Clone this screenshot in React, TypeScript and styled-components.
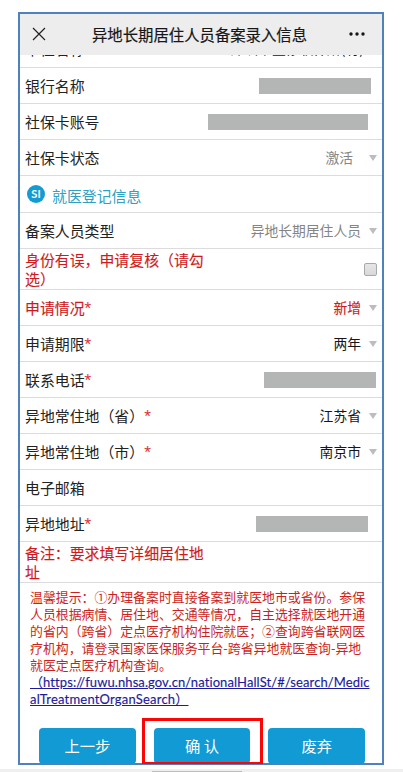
import React from "react";
import styled, { createGlobalStyle } from "styled-components";

const GlobalStyle = createGlobalStyle`
  * { box-sizing: border-box; }
  html, body { margin: 0; background: #fff; overflow: hidden; }
  body { font-family: "Noto Sans CJK SC", sans-serif; text-spacing-trim: space-all; }
  button { font-family: inherit; }
`;

const Page = styled.div`
  display: flex;
  flex-direction: column;
  width: 403px;
  height: 772px;
  padding-top: 12px;
  background: #fff;
  overflow: hidden;
`;

const Phone = styled.main`
  display: flex;
  flex-direction: column;
  width: 366px;
  height: 753px;
  margin-left: 18px;
  flex: none;
  border: 2px solid #4f81bd;
  background: #fff;
`;

const Header = styled.header`
  display: grid;
  grid-template-columns: 36px 1fr 48px;
  align-items: center;
  height: 41px;
  flex: none;
  padding: 0 0 2px;
  background: #ededed;
  svg { display: block; }
`;

const CloseButton = styled.button`
  padding: 0 0 0 12px;
  border: 0;
  background: none;
`;

const MoreButton = styled.button`
  padding: 0 0 0 14px;
  border: 0;
  background: none;
`;

const Title = styled.h1`
  margin: 0;
  padding-left: 36px;
  font-size: 15.36px;
  line-height: 20px;
  font-weight: 400;
  -webkit-text-stroke: 0.2px #171717;
  color: #171717;
  white-space: nowrap;
`;

const Row = styled.div<{ $h?: number }>`
  display: flex;
  align-items: center;
  justify-content: space-between;
  height: ${(p) => p.$h ?? 36}px;
  flex: none;
  padding: 0 5px;
  border-bottom: 1px solid #dcdcde;
`;

const ClippedRow = styled(Row)`
  align-items: flex-end;
  overflow: hidden;
  padding-bottom: 9px;
  padding-right: 18px;
`;

const Label = styled.label<{ $red?: boolean }>`
  width: 182px;
  font-size: 14.9px;
  line-height: 19.5px;
  color: ${(p) => (p.$red ? "#cf1a1c" : "#222")};
  -webkit-text-stroke: ${(p) => (p.$red ? "0.15px #cf1a1c" : "0")};
`;

const Star = styled.span`
  color: #e0383c;
  font-family: Roboto, sans-serif;
  font-size: 15.5px;
  line-height: 1;
  vertical-align: 1px;
  -webkit-text-stroke: 0;
`;

const Value = styled.div<{ $tone?: string }>`
  display: flex;
  align-items: center;
  gap: 8px;
  padding-bottom: 2px;
  font-size: 13.8px;
  line-height: 20px;
  white-space: nowrap;
  color: ${(p) => p.$tone ?? "#161616"};
  -webkit-text-stroke: ${(p) => (p.$tone === "#cf1a1c" ? "0.15px #cf1a1c" : "0")};
`;

const ClippedValue = styled(Value)`
  padding-bottom: 0;
`;

const Spaced = styled.span`
  margin-right: 8px;
`;

const Arrow = styled.span`
  border: 4px solid transparent;
  border-top: 6px solid #bdbdbd;
  border-bottom: 0;
  margin-top: 3px;
`;

const Mask = styled.div<{ $w: number; $right: number }>`
  width: ${(p) => p.$w}px;
  height: 16px;
  margin-right: ${(p) => p.$right}px;
  background: #b4b6b5;
`;

const Section = styled.h2`
  display: flex;
  align-items: center;
  gap: 7px;
  height: 37px;
  flex: none;
  margin: 0;
  padding: 0 7px;
  border-bottom: 1px solid #dcdcde;
  font-size: 14.9px;
  line-height: 20px;
  font-weight: 400;
  color: #2f9fc4;
`;

const SectionName = styled.span`
  padding-top: 3px;
`;

const Badge = styled.span`
  display: flex;
  align-items: center;
  justify-content: center;
  width: 18px;
  height: 18px;
  border-radius: 50%;
  background: #149bd3;
  color: #fff;
  font: 700 11px/18px Lato, sans-serif;
`;

const Checkbox = styled.span`
  width: 13px;
  height: 13px;
  border: 1px solid #a9a9a9;
  border-radius: 2px;
  background: linear-gradient(#e6e6e6, #d8d8d8);
`;

const Tip = styled.div`
  flex: none;
  height: 135px;
  padding: 5px 0 0 10px;
  font-size: 12.9px;
  line-height: 17px;
  color: #cc1f22;
  white-space: nowrap;
`;

const TipLine = styled.div`
  height: 17px;
`;

const TipLink = styled.a<{ $spacing: number }>`
  font-family: Lato, "Noto Sans CJK SC", sans-serif;
  font-size: 13px;
  letter-spacing: ${(p) => p.$spacing}px;
  color: #1d1b9c;
  -webkit-text-stroke: 0.15px #1d1b9c;
  text-decoration: underline;
`;

const Actions = styled.div`
  display: flex;
  gap: 18px;
  padding: 10px 17px 0 19px;
  flex: 1;
`;

const ActionButton = styled.button<{ $marked?: boolean }>`
  position: relative;
  flex: 1;
  height: 36px;
  padding: 0 0 2px;
  border: 0;
  border-radius: 4px;
  background: #119ad4;
  color: #fff;
  font-size: 15.3px;
  line-height: 34px;
  ${(p) =>
    p.$marked &&
    `&::after {
      content: "";
      position: absolute;
      left: -12px;
      right: -13px;
      top: -10px;
      bottom: 0;
      border: 3px solid #fc0505;
      border-bottom-width: 2px;
    }`}
`;

const ScrollTrack = styled.div`
  height: 3px;
  margin-top: 4px;
  padding: 2px 0 0 152px;
  background: #efefef;
`;

const ScrollThumb = styled.div`
  width: 90px;
  height: 1px;
  background: #bcbcbc;
`;

type Field = {
  label: string;
  h?: number;
  red?: boolean;
  required?: boolean;
  value?: string;
  tone?: string;
  spaced?: boolean;
  mask?: [number, number];
  check?: boolean;
};

const cardFields: Field[] = [
  { label: "银行名称", mask: [112, 6] },
  { label: "社保卡账号", mask: [160, 9] },
  { label: "社保卡状态", value: "激活", tone: "#858585", spaced: true },
];

const visitFields: Field[] = [
  { label: "备案人员类型", value: "异地长期居住人员", tone: "#858585" },
  { label: "身份有误，申请复核（请勾选）", red: true, h: 41, check: true },
  { label: "申请情况", red: true, required: true, value: "新增", tone: "#cf1a1c" },
  { label: "申请期限", required: true, value: "两年" },
  { label: "联系电话", required: true, mask: [112, 1] },
  { label: "异地常住地（省）", required: true, value: "江苏省" },
  { label: "异地常住地（市）", required: true, value: "南京市" },
  { label: "电子邮箱" },
  { label: "异地地址", required: true, mask: [112, 9] },
  { label: "备注：要求填写详细居住地址", red: true, h: 41 },
];

const tipLines = [
  "温馨提示：①办理备案时直接备案到就医地市或省份。参保",
  "人员根据病情、居住地、交通等情况，自主选择就医地开通",
  "的省内（跨省）定点医疗机构住院就医；②查询跨省联网医",
  "疗机构，请登录国家医保服务平台-跨省异地就医查询-异地",
  "就医定点医疗机构查询。",
];

const FieldRow = ({ f }: { f: Field }) => (
  <Row $h={f.h}>
    <Label $red={f.red}>
      {f.label}
      {f.required && <Star>*</Star>}
    </Label>
    {f.value && (
      <Value $tone={f.tone}>
        {f.spaced ? <Spaced>{f.value}</Spaced> : f.value}
        <Arrow />
      </Value>
    )}
    {f.mask && <Mask $w={f.mask[0]} $right={f.mask[1]} />}
    {f.check && <Checkbox />}
  </Row>
);

export default function App() {
  return (
    <>
      <GlobalStyle />
      <Page>
        <Phone>
          <Header>
            <CloseButton aria-label="关闭">
              <svg width="14" height="14" viewBox="0 0 14 14" stroke="#222" strokeWidth="1.2">
                <path d="M1 1L13 13M13 1L1 13" />
              </svg>
            </CloseButton>
            <Title>异地长期居住人员备案录入信息</Title>
            <MoreButton aria-label="更多">
              <svg width="18" height="4" viewBox="0 0 18 4" fill="#161616">
                <circle cx="3" cy="2" r="1.7" />
                <circle cx="9" cy="2" r="1.7" />
                <circle cx="15" cy="2" r="1.7" />
              </svg>
            </MoreButton>
          </Header>
          <ClippedRow $h={13}>
            <Label>单位名称</Label>
            <ClippedValue>深圳市壹修软件所(有)</ClippedValue>
          </ClippedRow>
          {cardFields.map((f) => (
            <FieldRow key={f.label} f={f} />
          ))}
          <Section>
            <Badge>SI</Badge>
            <SectionName>就医登记信息</SectionName>
          </Section>
          {visitFields.map((f) => (
            <FieldRow key={f.label} f={f} />
          ))}
          <Tip>
            {tipLines.map((line) => (
              <TipLine key={line}>{line}</TipLine>
            ))}
            <TipLine>
              <TipLink $spacing={0.09}>（https://fuwu.nhsa.gov.cn/nationalHallSt/#/search/Medic</TipLink>
            </TipLine>
            <TipLine>
              <TipLink $spacing={0.2}>alTreatmentOrganSearch）</TipLink>
            </TipLine>
          </Tip>
          <Actions>
            <ActionButton>上一步</ActionButton>
            <ActionButton $marked>确 认</ActionButton>
            <ActionButton>废弃</ActionButton>
          </Actions>
        </Phone>
        <ScrollTrack>
          <ScrollThumb />
        </ScrollTrack>
      </Page>
    </>
  );
}
